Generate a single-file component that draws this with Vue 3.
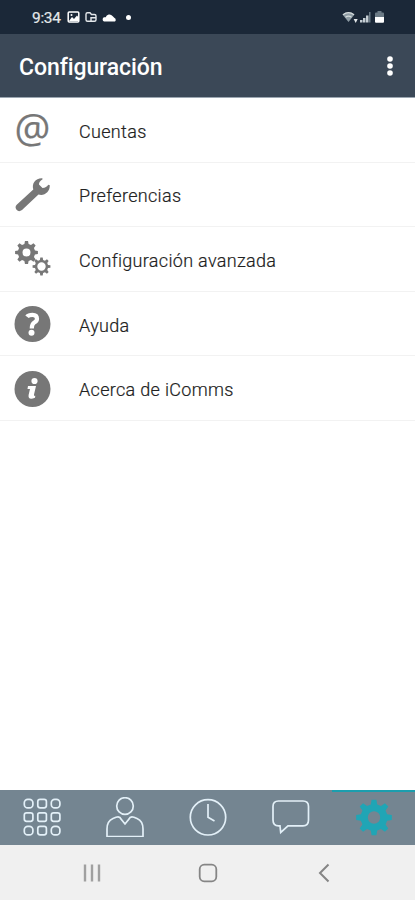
<script setup>
const gear = (cx, cy, outer, inner, hole, teeth) => {
  const pts = []
  const step = (Math.PI * 2) / teeth
  for (let i = 0; i < teeth; i++) {
    const a = i * step - Math.PI / 2
    for (const [r, d] of [[inner, -0.31], [outer, -0.17], [outer, 0.17], [inner, 0.31]]) {
      const t = a + d * step
      pts.push(`${(cx + r * Math.cos(t)).toFixed(2)} ${(cy + r * Math.sin(t)).toFixed(2)}`)
    }
  }
  return `M${pts.join('L')}ZM${cx - hole} ${cy}a${hole} ${hole} 0 1 0 ${hole * 2} 0a${hole} ${hole} 0 1 0 ${-hole * 2} 0Z`
}

const items = [
  { id: 'accounts', label: 'Cuentas' },
  { id: 'preferences', label: 'Preferencias' },
  { id: 'advanced', label: 'Configuración avanzada' },
  { id: 'help', label: 'Ayuda' },
  { id: 'about', label: 'Acerca de iComms' },
]
const keys = [0, 1, 2, 3, 4, 5, 6, 7, 8]
const tabs = ['keypad', 'contacts', 'recent', 'chat', 'settings']
</script>

<template>
  <div class="screen">
    <div class="status">
      <span class="time">9:34</span>
      <svg class="left-icons" width="72" height="16" viewBox="0 0 72 16">
        <rect x="1.2" y="3" width="10.600" height="10" rx="1" fill="none" stroke="#fff" stroke-width="1.500" />
        <path d="M2 12l3-4 2 2 3-3.500 2 2.500V12Z" fill="#fff" />
        <circle cx="4.500" cy="6" r="1" fill="#fff" />
        <path d="M25 12.200H20.500a1.500 1.500 0 0 1-1.500-1.500V5.300a1.500 1.500 0 0 1 1.500-1.500H23l1.500 1.700h3a1.500 1.500 0 0 1 1.500 1.500v3.700a1.500 1.500 0 0 1-1.500 1.500H25a1 1 0 0 1-1-1V8.800h4.500" fill="none" stroke="#e4e8eb" stroke-width="1.400" />
        <path d="M37 12.500a2.300 2.300 0 0 1 0-4.200h1.700a3.800 3.800 0 0 1 6.800-1.200l2 2a2 2 0 0 1 .5 3.400Z" fill="#fff" />
        <circle cx="61.500" cy="8.500" r="2.500" fill="#fff" />
      </svg>
      <svg class="right-icons" width="44" height="16" viewBox="0 0 44 16">
        <path d="M0.500 5.500Q6.500 0.800 12.500 5.500L6.500 13Z" fill="#8d9ba3" />
        <path d="M1 5.700Q6.500 1.500 12 5.700M3.500 8.200Q6.500 6 9.500 8.200" fill="none" stroke="#d5dbdc" stroke-width="1.200" />
        <path d="M11.700 10h4l-2 4Z" fill="#e5e9eb" />
        <path d="M18 13.500v-2.500h2.500v2.500ZM21 13.500V9h2.500v4.500ZM24 13.500V6.500h2.500v7Z" fill="#c5ced4" />
        <path d="M27 13.500V3h1.500v10.500Z" fill="#6c7c88" />
        <path d="M33 8V4.500q0-1 1-1h1.500V2h4v1.500H41q1 0 1 1V8Z" fill="#6c7b86" />
        <path d="M33 8h9v4.800q0 1-1 1h-7q-1 0-1-1Z" fill="#fff" />
      </svg>
    </div>

    <header class="header">
      <h1>Configuración</h1>
      <svg width="8" height="22" viewBox="0 0 8 22">
        <circle v-for="y in [4, 11, 18]" :key="y" cx="4" :cy="y" r="2.800" fill="#fff" />
      </svg>
    </header>

    <main class="list">
      <div v-for="item in items" :key="item.id" class="row">
        <span v-if="item.id === 'accounts'" class="icon at">@</span>
        <svg v-else class="icon" width="37" height="36" viewBox="0 0 37 36">
          <template v-if="item.id === 'preferences'">
            <path d="M19.300 12.500C17.500 6.500 21.500 1 28.300 1.300L28.600 2.300Q24.800 4.500 25 7.500L28.500 11Q32.500 10.800 34.300 7.800L35.800 8.300C36 15 30 19.500 24.500 17.500L8 33Q5 35.300 2.700 33Q.4 30.300 2.700 27.800Z" fill="#777" />
          </template>
          <template v-else-if="item.id === 'advanced'">
            <path :d="gear(12.500, 11.500, 11.500, 8.700, 4, 8)" fill="#777" fill-rule="evenodd" />
            <path :d="gear(27.500, 25.500, 9, 6.700, 4.200, 8)" fill="#777" fill-rule="evenodd" />
          </template>
          <template v-else-if="item.id === 'help'">
            <circle cx="18.500" cy="18" r="18" fill="#777" />
            <path d="M13 10.800Q14.500 8.800 18.500 8.800Q23 8.800 23 12.700Q23 15 20.300 16.500Q17.800 18 17.800 22.500" fill="none" stroke="#fff" stroke-width="4.200" />
            <circle cx="17.500" cy="26.800" r="3" fill="#fff" />
          </template>
          <template v-else>
            <circle cx="18.500" cy="18" r="18" fill="#777" />
            <circle cx="20.500" cy="10" r="3.100" fill="#fff" />
            <path d="M14 15H22L20 23.500Q19.700 25.300 21.300 24.800L21 26.800Q13.800 29.500 14.600 24L16 18H13.500Z" fill="#fff" />
          </template>
        </svg>
        <span class="label">{{ item.label }}</span>
      </div>
    </main>

    <nav class="tabs">
      <div v-for="tab in tabs" :key="tab" class="tab" :class="{ active: tab === 'settings' }">
        <svg width="40" height="40" viewBox="0 0 40 40" fill="none" stroke="#e3f0f8" stroke-width="1.700">
          <template v-if="tab === 'keypad'">
            <rect v-for="k in keys" :key="k" :x="2.300 + (k % 3) * 13.500" :y="2.300 + Math.floor(k / 3) * 13.500" width="8.600" height="8.600" :rx="k % 2 ? 2.300 : k === 4 ? 1.800 : 3.500" />
          </template>
          <template v-else-if="tab === 'contacts'">
            <circle cx="20" cy="9" r="8.300" />
            <path d="M2 39.700V32Q2 24 8 21.500L11 20.200Q15 19 16 22L20 27L24 22Q25 19 29 20.200L32 21.500Q38 24 38 32V39.700Z" />
          </template>
          <template v-else-if="tab === 'recent'">
            <circle cx="20" cy="20.300" r="17.700" />
            <path d="M20 7V20.300L26.500 24" />
          </template>
          <template v-else-if="tab === 'chat'">
            <path d="M7.500 4H32Q37.500 4 37.500 9.500V23Q37.500 28.800 32 28.800H17L9.700 35.500L9 28.800H7.500Q2 28.800 2 23V9.500Q2 4 7.500 4Z" />
          </template>
          <path v-else :d="gear(20, 20.500, 18, 13.500, 6.200, 8)" fill="#20a5b5" fill-rule="evenodd" stroke="none" />
        </svg>
      </div>
    </nav>

    <footer class="system">
      <svg width="20" height="20" viewBox="0 0 20 20">
        <path d="M4 1.500v17M11 1.500v17M18 1.500v17" stroke="#a0a0a0" stroke-width="2.400" />
      </svg>
      <svg width="20" height="20" viewBox="0 0 20 20">
        <rect x="1.700" y="1.700" width="16.600" height="16.600" rx="4.500" fill="none" stroke="#858585" stroke-width="1.800" />
      </svg>
      <svg width="20" height="20" viewBox="0 0 20 20">
        <path d="M14.500 1.500L6 10L14.500 18.500" fill="none" stroke="#858585" stroke-width="2" />
      </svg>
    </footer>
  </div>
</template>

<style>
body { margin: 0; }
</style>

<style scoped>
.screen {
  width: 415px;
  height: 900px;
  display: flex;
  flex-direction: column;
  background: #fff;
  font-family: Roboto, sans-serif;
  overflow: hidden;
}
.status {
  height: 34px;
  box-sizing: border-box;
  padding: 0 29px 0 32px;
  display: flex;
  align-items: center;
  background: #1b2838;
}
.time {
  width: 35px;
  font-size: 15.5px;
  letter-spacing: -0.3px;
  color: #e4e8ea;
  -webkit-text-stroke: 0.2px #e4e8ea;
  padding-top: 2px;
}
.right-icons { margin-left: auto; }
.header {
  height: 64px;
  box-sizing: border-box;
  padding: 0 21px 0 19px;
  display: flex;
  align-items: center;
  justify-content: space-between;
  background: #3b4857;
  border-bottom: 1px solid #9ba6b1;
}
h1 {
  margin: 5px 0 0;
  font-size: 23px;
  line-height: 30px;
  font-weight: 500;
  letter-spacing: -0.08px;
  color: #fff;
}
.header svg { margin-top: 1px; }
.list { flex: 1; }
.row {
  height: 64.6px;
  box-sizing: border-box;
  padding: 1px 14px 0;
  display: flex;
  align-items: center;
  gap: 28px;
  border-bottom: 1px solid #f2f2f2;
}
.icon { width: 37px; flex: none; }
.at {
  font: 400 40px/40px "Open Sans", sans-serif;
  color: #777;
  -webkit-text-stroke: 0.2px #777;
  display: flex;
  justify-content: center;
  padding-bottom: 4px;
}
.label {
  font-size: 18px;
  line-height: 24px;
  letter-spacing: 0.32px;
  color: #222;
  -webkit-text-stroke: 0.2px #222;
  margin-top: 3px;
  font-weight: 300;
}
.tabs {
  height: 55px;
  display: grid;
  grid-template-columns: repeat(5, 1fr);
  background: #748591;
}
.tab {
  display: flex;
  align-items: center;
  justify-content: center;
  border-top: 2px solid transparent;
  padding-bottom: 4px;
}
.active { border-color: #1b9eae; }
.system {
  height: 55px;
  padding: 0 81px;
  box-sizing: border-box;
  display: flex;
  align-items: center;
  justify-content: space-between;
  background: #f0f0f0;
}
</style>
